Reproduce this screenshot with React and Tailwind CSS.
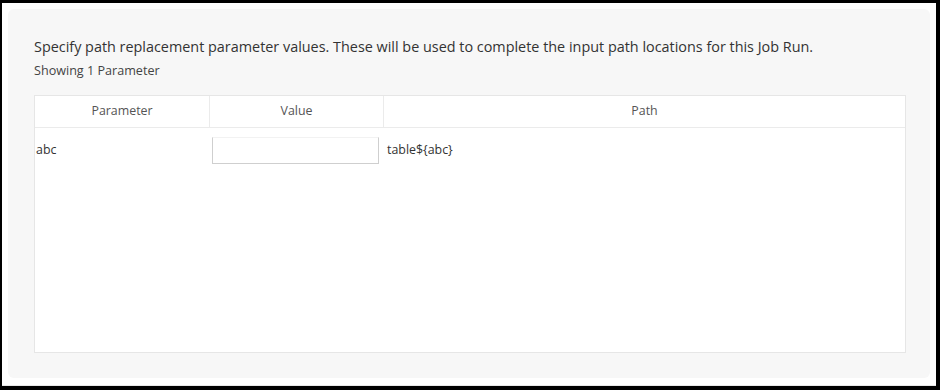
import React from "react";

const params = [{ name: "abc", value: "", path: "table${abc}" }];

export default function App() {
  return (
    <div className="w-[940px] h-[390px] bg-black pl-[2px] pr-[4px] pt-[3px] pb-[4px]">
      <div className="h-full bg-white border-b border-[#e8e8e8] p-[6px] pb-[7px]">
        <div
          className="h-full bg-[#f7f7f7] rounded-[6px] pl-[26px] pr-[24px] pt-[28px] pb-[25px] flex flex-col text-[#333333]"
          style={{ fontFamily: '"Open Sans", sans-serif' }}
        >
          <p className="text-[14.4px] leading-[20px]">
            Specify path replacement parameter values. These will be used to complete the input path locations for this Job Run.
          </p>
          <p className="text-[12.6px] leading-[18px] mt-[5px] text-[#444]">Showing 1 Parameter</p>

          <div className="mt-[15px] flex-1 bg-white border border-[#e6e6e6] flex flex-col">
            <div className="grid grid-cols-[174px_174px_1fr] h-[32px] border-b border-[#ebebeb] text-[12.4px] text-[#555]">
              <div className="flex items-center justify-center">Parameter</div>
              <div className="flex items-center justify-center border-l border-[#ebebeb]">Value</div>
              <div className="flex items-center justify-center border-l border-[#ebebeb]">Path</div>
            </div>
            {params.map((p) => (
              <div key={p.name} className="grid grid-cols-[174px_174px_1fr] items-center h-[44px] text-[12.4px] text-[#333]">
                <div className="pl-[1px]">{p.name}</div>
                <div className="pl-[3px]">
                  <input
                    type="text"
                    defaultValue={p.value}
                    className="w-[167px] h-[27px] block border border-[#cfcfcf] border-t-[#f2f2f2] bg-white outline-none px-2 text-[12px]"
                  />
                </div>
                <div className="pl-[4px]">{p.path}</div>
              </div>
            ))}
          </div>
        </div>
      </div>
    </div>
  );
}
